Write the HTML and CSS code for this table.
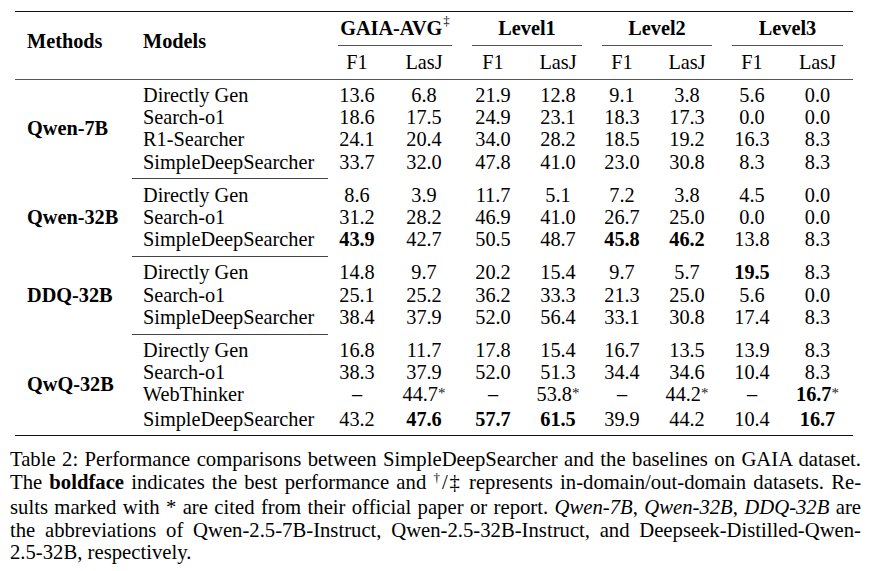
FILE: index.html
```html
<!DOCTYPE html>
<html>
<head>
<meta charset="utf-8">
<link rel="stylesheet" href="styles.css">
</head>
<body>
<div class="page">
  <div class="tbl">
    <div class="head row-grid">
      <div class="hm">Methods</div>
      <div class="hm">Models</div>
      <div class="hg">GAIA-AVG<span class="dag">‡</span></div>
      <div class="hg">Level1</div>
      <div class="hg">Level2</div>
      <div class="hg">Level3</div>
      <div class="hs">F1</div><div class="hs">LasJ</div>
      <div class="hs">F1</div><div class="hs">LasJ</div>
      <div class="hs">F1</div><div class="hs">LasJ</div>
      <div class="hs">F1</div><div class="hs">LasJ</div>
    </div>

    <div class="grp row-grid">
      <div class="meth r4">Qwen-7B</div>
      <div class="mod">Directly Gen</div><div>13.6</div><div>6.8</div><div>21.9</div><div>12.8</div><div>9.1</div><div>3.8</div><div>5.6</div><div>0.0</div>
      <div class="mod">Search-o1</div><div>18.6</div><div>17.5</div><div>24.9</div><div>23.1</div><div>18.3</div><div>17.3</div><div>0.0</div><div>0.0</div>
      <div class="mod">R1-Searcher</div><div>24.1</div><div>20.4</div><div>34.0</div><div>28.2</div><div>18.5</div><div>19.2</div><div>16.3</div><div>8.3</div>
      <div class="mod">SimpleDeepSearcher</div><div>33.7</div><div>32.0</div><div>47.8</div><div>41.0</div><div>23.0</div><div>30.8</div><div>8.3</div><div>8.3</div>
    </div>
    <div class="sep"></div>

    <div class="grp row-grid">
      <div class="meth r3">Qwen-32B</div>
      <div class="mod">Directly Gen</div><div>8.6</div><div>3.9</div><div>11.7</div><div>5.1</div><div>7.2</div><div>3.8</div><div>4.5</div><div>0.0</div>
      <div class="mod">Search-o1</div><div>31.2</div><div>28.2</div><div>46.9</div><div>41.0</div><div>26.7</div><div>25.0</div><div>0.0</div><div>0.0</div>
      <div class="mod">SimpleDeepSearcher</div><div><b>43.9</b></div><div>42.7</div><div>50.5</div><div>48.7</div><div><b>45.8</b></div><div><b>46.2</b></div><div>13.8</div><div>8.3</div>
    </div>
    <div class="sep"></div>

    <div class="grp row-grid">
      <div class="meth r3">DDQ-32B</div>
      <div class="mod">Directly Gen</div><div>14.8</div><div>9.7</div><div>20.2</div><div>15.4</div><div>9.7</div><div>5.7</div><div><b>19.5</b></div><div>8.3</div>
      <div class="mod">Search-o1</div><div>25.1</div><div>25.2</div><div>36.2</div><div>33.3</div><div>21.3</div><div>25.0</div><div>5.6</div><div>0.0</div>
      <div class="mod">SimpleDeepSearcher</div><div>38.4</div><div>37.9</div><div>52.0</div><div>56.4</div><div>33.1</div><div>30.8</div><div>17.4</div><div>8.3</div>
    </div>
    <div class="sep"></div>

    <div class="grp row-grid">
      <div class="meth r4">QwQ-32B</div>
      <div class="mod">Directly Gen</div><div>16.8</div><div>11.7</div><div>17.8</div><div>15.4</div><div>16.7</div><div>13.5</div><div>13.9</div><div>8.3</div>
      <div class="mod">Search-o1</div><div>38.3</div><div>37.9</div><div>52.0</div><div>51.3</div><div>34.4</div><div>34.6</div><div>10.4</div><div>8.3</div>
      <div class="mod">WebThinker</div><div>–</div><div>44.7<span class="ast">*</span></div><div>–</div><div>53.8<span class="ast">*</span></div><div>–</div><div>44.2<span class="ast">*</span></div><div>–</div><div><b>16.7</b><span class="ast">*</span></div>
      <div class="mod">SimpleDeepSearcher</div><div>43.2</div><div><b>47.6</b></div><div><b>57.7</b></div><div><b>61.5</b></div><div>39.9</div><div>44.2</div><div>10.4</div><div><b>16.7</b></div>
    </div>
  </div>

  <div class="cap">
    <span class="ln">Table 2: Performance comparisons between SimpleDeepSearcher and the baselines on GAIA dataset.</span>
    <span class="ln">The <b>boldface</b> indicates the best performance and <span class="sup">†</span>/‡ represents in-domain/out-domain datasets. Re-</span>
    <span class="ln">sults marked with * are cited from their official paper or report. <i>Qwen-7B</i>, <i>Qwen-32B</i>, <i>DDQ-32B</i> are</span>
    <span class="ln">the abbreviations of Qwen-2.5-7B-Instruct, Qwen-2.5-32B-Instruct, and Deepseek-Distilled-Qwen-</span>
    <span class="ln last">2.5-32B, respectively.</span>
  </div>
</div>
</body>
</html>
```

FILE: styles.css
```css
html, body {
  margin: 0;
  padding: 0;
  background: #fff;
}

body {
  font-family: "Liberation Serif", "Times New Roman", serif;
  font-size: 20.3px;
  color: #000;
}

.page {
  padding-top: 11px;
}

.tbl {
  margin-left: 15px;
  width: 838px;
  border-top: 1.5px solid #111;
  border-bottom: 1.5px solid #111;
}

.row-grid {
  display: grid;
  grid-template-columns: 117px 196px 58px 76px 62px 68px 60px 70px 60px 71px;
}

.head {
  grid-template-rows: 33.5px 33px;
  border-bottom: 1px solid #555;
  line-height: 22px;
}

.hm {
  grid-row: 1 / 3;
  font-weight: bold;
  padding-top: 18px;
  padding-left: 12px;
}

.hm + .hm {
  padding-left: 11px;
}

.hg {
  grid-column: span 2;
  font-weight: bold;
  text-align: center;
  margin: 0 10px;
  border-bottom: 1px solid #555;
  display: flex;
  align-items: center;
  justify-content: center;
}

.dag {
  font-size: 13px;
  font-weight: normal;
  position: relative;
  top: -7px;
  margin-left: 1px;
}

.hs {
  text-align: center;
  display: flex;
  align-items: center;
  justify-content: center;
}

.grp {
  line-height: 22.2px;
  padding: 4.5px 0 5.5px;
  text-align: center;
}

.meth {
  grid-column: 1;
  align-self: center;
  font-weight: bold;
  text-align: left;
  padding-left: 12px;
}

.r4 { grid-row: 1 / span 4; }
.r3 { grid-row: 1 / span 3; }

.mod {
  grid-column: 2;
  text-align: left;
  padding-left: 11px;
}

.ast {
  font-size: 15px;
  position: relative;
  top: -3px;
  color: #222;
}

.sep {
  margin-left: 117px;
  width: 196px;
  height: 1px;
  background: #444;
}

.cap {
  margin: 12px 0 0 10px;
  width: 851px;
  line-height: 22.5px;
  font-size: 20.7px;
}

.ln {
  display: block;
  text-align: justify;
  text-align-last: justify;
  white-space: nowrap;
}

.ln.last {
  text-align-last: left;
}

.sup {
  font-size: 13px;
  position: relative;
  top: -7px;
}
```
